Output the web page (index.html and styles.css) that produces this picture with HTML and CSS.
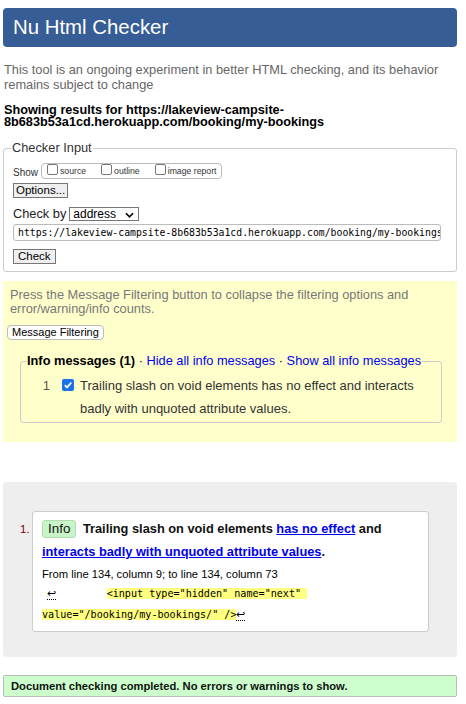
FILE: index.html
```html
<!DOCTYPE html>
<html lang="en">
<head>
<meta charset="utf-8">
<title>Nu Html Checker</title>
<link rel="stylesheet" href="styles.css">
</head>
<body>
<div class="page">
  <h1 class="banner">Nu Html Checker</h1>
  <p class="intro">This tool is an ongoing experiment in better HTML checking, and its behavior remains subject to change</p>
  <h2 class="showing">Showing results for https://lakeview-campsite-<br>8b683b53a1cd.herokuapp.com/booking/my-bookings</h2>

  <fieldset class="checker">
    <legend>Checker Input</legend>
    <div class="show-row">
      <span class="show-label">Show</span>
      <span class="show-opts">
        <label class="opt"><span class="cb"></span>source</label>
        <label class="opt"><span class="cb"></span>outline</label>
        <label class="opt"><span class="cb"></span>image report</label>
      </span>
    </div>
    <div class="row"><span class="btn">Options...</span></div>
    <div class="checkby">Check by <span class="select">address<svg class="chev" viewBox="0 0 10 6" width="9" height="6"><path d="M1 1 L5 5 L9 1" fill="none" stroke="#000" stroke-width="1.8"/></svg></span></div>
    <div class="url">https://lakeview-campsite-8b683b53a1cd.herokuapp.com/booking/my-bookings</div>
    <div class="row row-check"><span class="btn btn-check">Check</span></div>
  </fieldset>

  <div class="filters">
    <p class="filters-note">Press the Message Filtering button to collapse the filtering options and error/warning/info counts.</p>
    <span class="btn-round">Message Filtering</span>
    <fieldset class="infos">
      <legend><b>Info messages (1)</b> · <a href="#">Hide all info messages</a> · <a href="#">Show all info messages</a></legend>
      <div class="info-row">
        <span class="count">1</span>
        <span class="cb-on"><svg viewBox="0 0 12 12" width="12" height="12"><rect x="0" y="0" width="12" height="12" rx="2" fill="#1a73e8"/><path d="M2.8 6.2 L5 8.4 L9.3 3.6" fill="none" stroke="#fff" stroke-width="1.7"/></svg></span>
        <span class="info-text">Trailing slash on void elements has no effect and interacts badly with unquoted attribute values.</span>
      </div>
    </fieldset>
  </div>

  <div class="results">
    <div class="msg-row">
      <span class="num">1.</span>
      <div class="msg">
        <p class="msg-title"><span class="badge">Info</span> <b>Trailing slash on void elements <a href="#">has no effect</a> and <a href="#">interacts badly with unquoted attribute values</a>.</b></p>
        <p class="loc">From line 134, column 9; to line 134, column 73</p>
        <p class="extract"><span class="lf">↩</span>        <mark>&lt;input type="hidden" name="next" </mark><br><mark>value="/booking/my-bookings/" /&gt;</mark><span class="lf">↩</span></p>
      </div>
    </div>
  </div>

  <p class="success">Document checking completed. No errors or warnings to show.</p>
</div>
</body>
</html>
```

FILE: styles.css
```css
* { box-sizing: border-box; }
body {
  margin: 0;
  font-family: "Liberation Sans", Arial, sans-serif;
  color: #000;
  background: #fff;
}
.page { padding: 8px 9px 0 3px; }

.banner {
  margin: 0;
  height: 39px;
  background: #365d95;
  color: #fff;
  border-radius: 4px;
  font-weight: normal;
  font-size: 20.4px;
  line-height: 39px;
  padding-left: 10px;
}
.intro {
  margin: 15px 0 0 1px;
  color: #666;
  font-size: 12.8px;
  line-height: 15px;
}
.showing {
  margin: 12px 0 0 1px;
  font-size: 12.7px;
  line-height: 12px;
  font-weight: bold;
}

.checker {
  margin: 12px 0 0;
  border: 1px solid #ccc;
  border-radius: 3px;
  padding: 0 9px 7px;
}
.checker legend {
  font-size: 12.8px;
  line-height: 16px;
  color: #333;
  padding: 0 1px;
  margin-left: -2px;
}
.show-row {
  display: flex;
  align-items: center;
  margin-top: 7px;
  height: 16px;
}
.show-label { font-size: 10px; color: #333; margin-right: 3px; padding-top: 2px; }
.show-opts {
  display: flex;
  align-items: center;
  height: 16px;
  border: 1px solid #bbb;
  border-radius: 4px;
  padding: 0 5px;
  font-size: 8.7px;
  color: #333;
  gap: 15px;
}
.opt { display: flex; align-items: center; }
.cb {
  display: inline-block;
  width: 11px;
  height: 11px;
  border: 1px solid #767676;
  border-radius: 2px;
  margin-right: 2px;
  margin-top: -3px;
}
.row { margin-top: 4px; display: flex; }
.btn {
  display: inline-block;
  font-size: 11.5px;
  line-height: 13px;
  background: #efefef;
  border: 1px solid #767676;
  padding: 0 2px;
  color: #000;
}
.btn-check { padding: 0 4px; }
.checkby {
  margin-top: 9px;
  font-size: 12.8px;
  line-height: 14px;
  color: #222;
  display: flex;
  align-items: center;
  gap: 3px;
}
.select {
  display: inline-flex;
  align-items: center;
  justify-content: space-between;
  width: 70px;
  height: 14px;
  border: 1px solid #767676;
  font-size: 12px;
  color: #000;
  padding: 0 4px 0 3px;
}
.chev { margin-top: 1px; }
.url {
  margin-top: 3px;
  height: 17px;
  width: 428px;
  border: 1px solid #bbb;
  border-radius: 3px;
  font-family: "DejaVu Sans Mono", monospace;
  font-size: 9.8px;
  line-height: 15px;
  padding-left: 4px;
  white-space: nowrap;
  overflow: hidden;
  color: #000;
}
.row-check { margin-top: 8px; }

.filters {
  margin-top: 9px;
  background: #ffffcc;
  padding: 7px 15px 19px 7px;
}
.filters-note {
  margin: 0;
  color: #777;
  font-size: 12.8px;
  line-height: 14px;
}
.btn-round {
  display: block;
  width: fit-content;
  margin: 9px 0 0 -3px;
  font-size: 11px;
  line-height: 13px;
  padding: 0 4px;
  background: #fff;
  border: 1px solid #bbb;
  border-radius: 4px;
  color: #000;
}
.infos {
  margin: 13px 0 0 10px;
  border: 1px solid #ccc;
  border-radius: 3px;
  padding: 0 0 2px 0;
}
.infos legend {
  font-size: 12.8px;
  line-height: 16px;
  padding: 0 1px;
  margin-left: 5px;
}
.infos legend a { color: #00e; text-decoration: none; }
.info-row {
  display: flex;
  align-items: flex-start;
  font-size: 13px;
  line-height: 23px;
  color: #333;
  margin-top: 5px;
}
.count { flex: none; width: 29px; text-align: right; color: #555; }
.cb-on { flex: none; margin-left: 12px; padding-top: 5px; line-height: 0; }
.info-text { margin-left: 6px; }

.results {
  margin-top: 40px;
  background: #eee;
  border-radius: 4px;
  padding: 29px 28px 25px 17px;
}
.msg-row { display: flex; align-items: flex-start; }
.num {
  flex: none;
  font-size: 11.5px;
  color: #800;
  width: 12px;
  margin-top: 12px;
}
.msg {
  flex: 1;
  background: #fff;
  border: 1px solid #ccc;
  border-radius: 3px;
  padding: 5px 10px 6px 9px;
}
.msg-title {
  margin: 0;
  font-size: 12.8px;
  line-height: 23px;
  color: #111;
}
.msg-title a { color: #00e; text-decoration: underline; }
.badge {
  display: inline-block;
  font-size: 13.4px;
  line-height: 16px;
  padding: 0 5px;
  background: #c8f5c8;
  border: 1px solid #b0dcb0;
  border-radius: 3px;
  margin-right: 3px;
}
.loc {
  margin: 4px 0 0;
  font-size: 11.2px;
  line-height: 14px;
}
.extract {
  margin: 2px 0 0;
  font-family: "DejaVu Sans Mono", monospace;
  font-size: 10.1px;
  line-height: 21px;
  white-space: pre;
}
.extract mark { background: #ffff80; color: #000; }
.lf {
  font-family: "Liberation Sans", Arial, sans-serif;
  font-size: 11px;
  border-bottom: 1px dotted #000;
  margin-left: 5px;
  margin-right: 2px;
}
.extract mark + .lf { margin-left: 0; margin-right: 0; }

.success {
  margin: 18px 0 0;
  background: #ccffcc;
  border: 1px solid #bbb;
  border-radius: 2px;
  font-size: 11.2px;
  font-weight: bold;
  line-height: 20px;
  padding-left: 7px;
  color: #111;
}
```
